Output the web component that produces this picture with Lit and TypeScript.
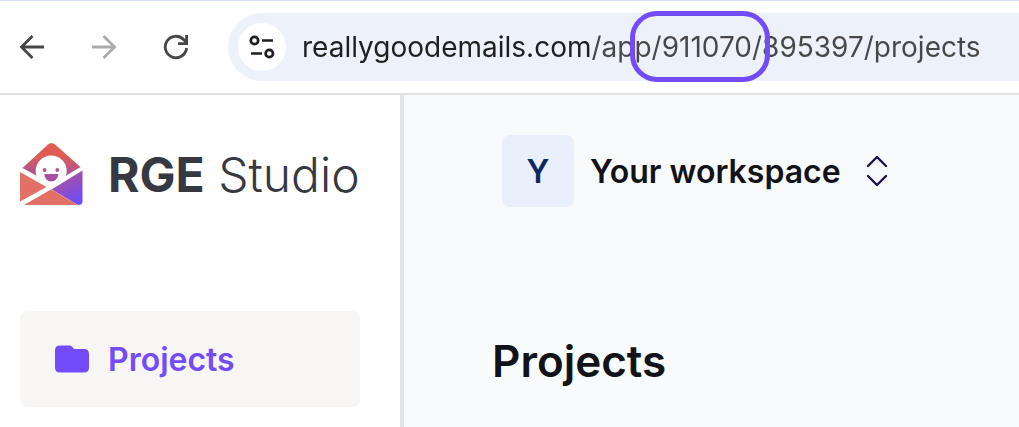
import { LitElement, html, css } from "lit";
import { customElement, property } from "lit/decorators.js";

@customElement("browser-toolbar")
class BrowserToolbar extends LitElement {
  @property() url = "";

  static styles = css`
    :host {
      display: block;
      box-sizing: border-box;
      border-top: 1px solid #d3e0fb;
      border-bottom: 2px solid #e1e1e1;
      background: #fff;
    }
    .bar {
      display: flex;
      align-items: center;
      padding: 12px 0;
    }
    .nav {
      display: flex;
      flex: none;
      gap: 24px;
      padding: 0 28px 0 8px;
    }
    button {
      display: flex;
      align-items: center;
      justify-content: center;
      width: 48px;
      height: 48px;
      padding: 0;
      border: 0;
      border-radius: 50%;
      background: none;
      color: #444746;
    }
    button:disabled {
      color: #ababab;
    }
    .omnibox {
      position: relative;
      display: flex;
      flex: 1;
      align-items: center;
      min-width: 0;
      height: 68px;
      gap: 16px;
      padding-left: 10px;
      box-sizing: border-box;
      border-radius: 34px 0 0 34px;
      background: #edf2fa;
    }
    .omnibox button {
      flex: none;
      background: #fff;
      color: #1f1f1f;
    }
    .url {
      flex: 1;
      min-width: 0;
      height: 40px;
      padding: 0;
      border: 0;
      outline: 0;
      background: linear-gradient(90deg, #1f1f1f 289px, #474747 289px);
      background-clip: text;
      -webkit-background-clip: text;
      -webkit-text-fill-color: transparent;
      color: #474747;
      font: 400 28px Inter, "Liberation Sans", sans-serif;
    }
    .ring {
      position: absolute;
      left: 402px;
      top: -2px;
      width: 140px;
      height: 71px;
      box-sizing: border-box;
      border: 5px solid #744bf8;
      border-radius: 27px;
      pointer-events: none;
    }
  `;

  render() {
    return html`
      <div class="bar">
        <div class="nav">
          <button aria-label="Back">
            <svg width="26" height="26" viewBox="0 0 26 26" fill="none" stroke="currentColor" stroke-width="2.8">
              <path d="M25 13H3M13.5 2 2.5 13l11 11" />
            </svg>
          </button>
          <button aria-label="Forward" disabled>
            <svg width="26" height="26" viewBox="0 0 26 26" fill="none" stroke="currentColor" stroke-width="2.8">
              <path d="M1 13h22M12.5 2l11 11-11 11" />
            </svg>
          </button>
          <button aria-label="Reload">
            <svg width="26" height="26" viewBox="0 0 26 26" fill="none" stroke="currentColor" stroke-width="2.8">
              <path d="M23.6 14A10.700 10.700 0 1 1 20.800 5.700L23 8.500M15 9.600h8.600V1" />
            </svg>
          </button>
        </div>
        <div class="omnibox">
          <button aria-label="View site information">
            <svg width="26" height="26" viewBox="0 0 26 26" fill="none" stroke="currentColor" stroke-width="2.7">
              <circle cx="5.5" cy="6.500" r="3.700" />
              <path d="M13 6.500h11M2 19.500h11" />
              <circle cx="20.300" cy="19.500" r="3.700" />
            </svg>
          </button>
          <input class="url" type="text" aria-label="Address" spellcheck="false" .value=${this.url} />
          <span class="ring"></span>
        </div>
      </div>
    `;
  }
}

@customElement("studio-sidebar")
class StudioSidebar extends LitElement {
  static styles = css`
    :host {
      display: block;
      flex: none;
      width: 404px;
      padding: 40px 40px 20px 20px;
      box-sizing: border-box;
      border-right: 4px solid #e3e4eb;
      background: #fff;
      font-family: Inter, "Liberation Sans", sans-serif;
    }
    .brand {
      display: flex;
      align-items: center;
      height: 80px;
      gap: 24px;
      margin-bottom: 96px;
      color: #363942;
      font-size: 48px;
      line-height: 60px;
      font-weight: 300;
      white-space: nowrap;
      text-decoration: none;
    }
    .brand svg {
      flex: none;
    }
    .brand b {
      font-weight: 700;
    }
    .item {
      display: flex;
      align-items: center;
      height: 96px;
      gap: 18px;
      padding: 0 34px;
      box-sizing: border-box;
      border-radius: 8px;
      background: #f7f6f5;
      color: #744bf8;
      font-size: 32px;
      font-weight: 600;
      text-decoration: none;
    }
  `;

  render() {
    return html`
      <a class="brand" href="#home">
        <svg width="64" height="64" viewBox="0 0 64 64">
          <defs>
            <linearGradient id="flap" x1="0" y1="0" x2="0" y2="1">
              <stop offset=".3" stop-color="#e05c50" />
              <stop offset="1" stop-color="#8e4dc0" />
            </linearGradient>
            <linearGradient id="side" x1=".3" y1="0" x2=".8" y2="1">
              <stop offset="0" stop-color="#b4528c" />
              <stop offset="1" stop-color="#6b4bff" />
            </linearGradient>
          </defs>
          <path d="M2.500 25 28 1.500Q31.500-1.500 35 1.500L60.500 24 32 41Z" fill="url(#flap)" />
          <circle cx="31.200" cy="28" r="15.500" fill="#fff" />
          <circle cx="24.600" cy="27" r="1.900" fill="#b65394" />
          <circle cx="37.300" cy="27" r="1.900" fill="#b65394" />
          <path d="M24.300 31h14a7 7.500 0 0 1-14 0Z" fill="#a750a0" />
          <path d="M0 29 26.500 44 0 58.500Z" fill="#e27067" />
          <path d="M31.500 46.500 62.500 27.500V58q0 4-4.500 4Z" fill="url(#side)" />
          <path d="M4 62 31 46.500 58 62Z" fill="#e27067" />
        </svg>
        <span><b>RGE</b> Studio</span>
      </a>
      <nav>
        <a class="item" href="#projects" aria-current="page">
          <svg width="36" height="28" viewBox="0 0 36 28" fill="currentColor">
            <path d="M6 .5H15.500Q17 .5 18 1.500L20 4H30Q35 4 35 9V22.500Q35 27.500 30 27.500H6Q1 27.500 1 22.500V5.500Q1 .5 6 .5Z" />
          </svg>
          <span>Projects</span>
        </a>
      </nav>
    `;
  }
}

@customElement("app-root")
class AppRoot extends LitElement {
  static styles = css`
    :host {
      display: flex;
      flex-direction: column;
      min-height: 100vh;
      font-family: Inter, "Liberation Sans", sans-serif;
      color: #111318;
    }
    .page {
      display: flex;
      flex: 1;
    }
    main {
      flex: 1;
      min-width: 0;
      padding: 40px 88px 0;
      background: #f9fafc;
    }
    .workspace {
      display: flex;
      align-items: center;
      gap: 16px;
      margin-left: 10px;
      padding: 0;
      border: 0;
      background: none;
      color: inherit;
      font: 600 32px Inter, "Liberation Sans", sans-serif;
      white-space: nowrap;
    }
    .tile {
      display: grid;
      place-items: center;
      width: 72px;
      height: 72px;
      border-radius: 8px;
      background: #e9f0fb;
      color: #0c2863;
    }
    .workspace svg {
      margin-left: 8px;
    }
    h1 {
      margin: 128px 0 0;
      font-size: 44px;
      line-height: 52px;
      font-weight: 600;
    }
  `;

  render() {
    return html`
      <browser-toolbar url="reallygoodemails.com/app/911070/895397/projects"></browser-toolbar>
      <div class="page">
        <studio-sidebar></studio-sidebar>
        <main>
          <button class="workspace" aria-haspopup="listbox">
            <span class="tile">Y</span>
            <span>Your workspace</span>
            <svg width="24" height="32" viewBox="0 0 24 32" fill="none" stroke="#1e0f4f" stroke-width="2.4" stroke-linecap="round" stroke-linejoin="round">
              <path d="M3 11l9-9 9 9M3 21l9 9 9-9" />
            </svg>
          </button>
          <h1>Projects</h1>
        </main>
      </div>
    `;
  }
}
